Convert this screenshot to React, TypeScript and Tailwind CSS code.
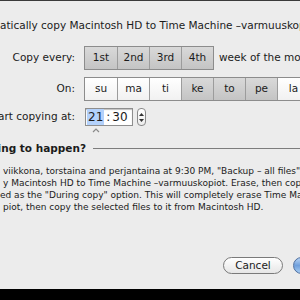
import React from "react";

const font = { fontFamily: '"DejaVu Sans", Verdana, sans-serif' };

function Seg({ label, sel, first }: { label: string; sel: boolean; first?: boolean }) {
  return (
    <div
      className={
        "w-[32px] shrink-0 flex items-center justify-center " +
        (first ? "" : "border-l border-[#9c9c9c] ") +
        (sel
          ? "bg-gradient-to-b from-[#d9d9d9] to-[#c4c4c4]"
          : "bg-gradient-to-b from-[#ffffff] to-[#f1f1f1]")
      }
    >
      {label}
    </div>
  );
}

export default function App() {
  const weeks = ["1st", "2nd", "3rd", "4th"];
  const days: [string, boolean][] = [
    ["su", false],
    ["ma", false],
    ["ti", false],
    ["ke", true],
    ["to", true],
    ["pe", true],
    ["la", false],
  ];
  return (
    <div
      className="w-[300px] h-[300px] overflow-hidden bg-[#ececec] flex flex-col text-[#1b1b1b] relative"
      style={font}
    >
      <div className="h-px bg-[#3a3a3a] shrink-0" />
      <div className="mt-[17px] h-[14px] leading-[14px] text-[10.5px] whitespace-nowrap">
        atically copy Macintosh HD to Time Machine –varmuuskopiot
      </div>

      {/* Copy every */}
      <div className="mt-[14px] flex items-center text-[10.5px] whitespace-nowrap">
        <div className="w-[75px] flex justify-end shrink-0">Copy every:</div>
        <div className="ml-[9px] h-[24px] flex border border-[#8c8c8c] shrink-0">
          {weeks.map((w, i) => (
            <Seg key={w} label={w} sel={true} first={i === 0} />
          ))}
        </div>
        <div className="ml-[5px]">week of the month</div>
      </div>

      {/* On */}
      <div className="mt-[7px] flex items-center text-[10.5px] whitespace-nowrap">
        <div className="w-[75px] flex justify-end shrink-0">On:</div>
        <div className="ml-[9px] h-[24px] flex border border-[#8c8c8c] shrink-0">
          {days.map(([d, s], i) => (
            <Seg key={d} label={d} sel={s} first={i === 0} />
          ))}
        </div>
      </div>

      {/* Start copying at */}
      <div className="mt-[7px] flex items-center text-[10.5px] whitespace-nowrap">
        <div className="w-[75px] flex justify-end shrink-0">Start copying at:</div>
        <div className="ml-[10px] w-[48px] h-[18px] bg-white border border-[#8e8e8e] shadow-[inset_0_1px_1px_rgba(0,0,0,0.25)] flex items-center text-[12px] shrink-0">
          <span className="ml-[1px] bg-[#b3d1fb] px-[1px] leading-[16px]">21</span>
          <span className="mx-[2px]">:</span>
          <span>30</span>
        </div>
        <div className="ml-[4px] w-[9px] h-[18px] rounded-[4px] border border-[#8a8a8a] bg-gradient-to-b from-white to-[#ececec] flex flex-col items-center justify-center gap-[3px] shrink-0">
          <svg width="5" height="3" viewBox="0 0 5 3">
            <path d="M0 3 L2.5 0 L5 3 Z" fill="#333" />
          </svg>
          <svg width="5" height="3" viewBox="0 0 5 3">
            <path d="M0 0 L2.5 3 L5 0 Z" fill="#333" />
          </svg>
        </div>
      </div>
      <div className="ml-[92px] mt-[2px] h-[5px]">
        <svg width="8" height="5" viewBox="0 0 8 5">
          <path d="M1 4 L4 1 L7 4" stroke="#8a8a8a" strokeWidth="1.2" fill="none" />
        </svg>
      </div>

      {/* Heading */}
      <div className="mt-[8px] flex items-center text-[10.5px] font-bold whitespace-nowrap">
        <div className="w-[86px] flex justify-end shrink-0">What's going to happen?</div>
        <div className="ml-[7px] flex-1 h-px bg-[#7d7d7d]" />
      </div>

      {/* Body */}
      <div className="mt-[8px] text-[9px] leading-[12px] whitespace-nowrap">
        <div className="ml-[3px]">viikkona, torstaina and perjantaina at 9:30 PM, "Backup – all files" will</div>
        <div className="ml-[3px]">y Macintosh HD to Time Machine –varmuuskopiot. Erase, then copy</div>
        <div className="ml-[0px]">ed as the "During copy" option. This will completely erase Time Machine</div>
        <div className="ml-[3px]">piot, then copy the selected files to it from Macintosh HD.</div>
      </div>

      <div className="flex-1" />

      {/* Buttons */}
      <div className="flex items-center whitespace-nowrap">
        <div className="ml-[223px] w-[60px] h-[17px] rounded-full border border-[#7a7a7a] bg-gradient-to-b from-white to-[#e6e6e6] flex items-center justify-center text-[10.5px] shrink-0">
          Cancel
        </div>
        <div className="ml-[10px] w-[40px] h-[17px] rounded-full border border-[#4f6f9f] bg-gradient-to-b from-[#b9d4f4] via-[#6f9fdc] to-[#a8cdf3] shrink-0" />
      </div>

      <div className="mt-[15px] h-[11px] bg-black shrink-0" />
    </div>
  );
}
